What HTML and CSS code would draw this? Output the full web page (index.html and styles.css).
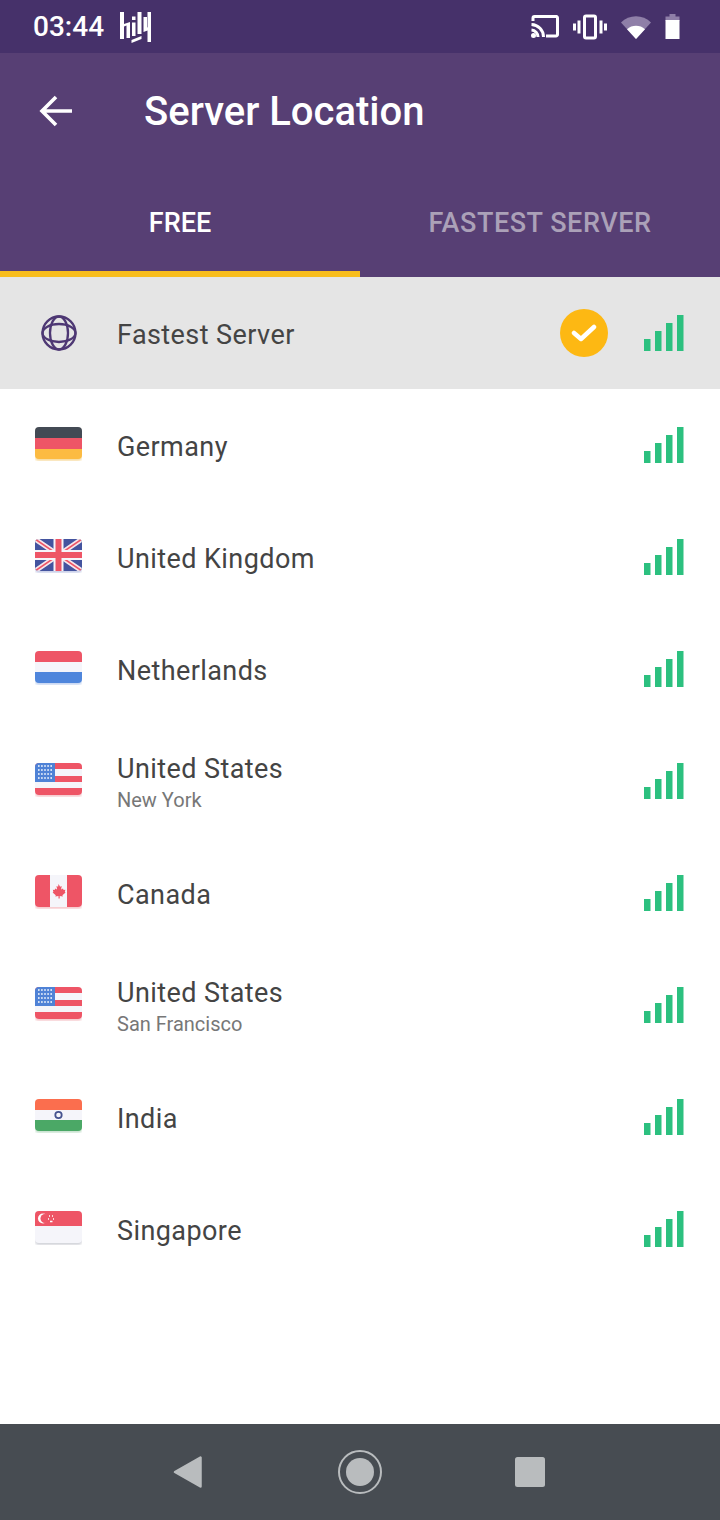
FILE: index.html
```html
<!DOCTYPE html>
<html lang="en">
<head>
  <meta charset="UTF-8">
  <title>Server Location</title>
  <link rel="stylesheet" href="styles.css">
</head>
<body>

  <svg class="defs" width="0" height="0">
    <symbol id="signal" viewBox="0 0 40 36">
      <rect x="0" y="24" width="6.5" height="12" fill="#2cc07f"/>
      <rect x="11" y="16" width="6.5" height="20" fill="#2cc07f"/>
      <rect x="22" y="8" width="6.5" height="28" fill="#2cc07f"/>
      <rect x="33" y="0" width="6.5" height="36" fill="#2cc07f"/>
    </symbol>
    <filter id="soft"><feGaussianBlur stdDeviation="0.8"/></filter>
    <clipPath id="flagClip"><rect width="47" height="32" rx="4"/></clipPath>
    <symbol id="flag-us" viewBox="0 0 47 34">
      <rect y="2" width="47" height="32" rx="4" fill="#f6c9cd" filter="url(#soft)"/>
      <g clip-path="url(#flagClip)">
        <rect width="47" height="32" fill="#f5f5fa"/>
        <rect width="47" height="6" fill="#ee5566"/>
        <rect y="13" width="47" height="6" fill="#ee5566"/>
        <rect y="25" width="47" height="7" fill="#ee5566"/>
        <rect width="20" height="19" fill="#4f82d6"/>
        <path d="M3 3h15M3 7h15M3 11h15M3 15h15" stroke="#fff" stroke-width="1.6" stroke-dasharray="1.6 1.5"/>
      </g>
    </symbol>
  </svg>

  <div class="status-bar">
    <span class="clock">03:44</span>
    <svg class="hily" width="31" height="31" viewBox="0 0 31 31" fill="#fff">
      <path d="M0 0h4v27H0zM4 12l6-2v16H6.500V13.500L4 14.500z"/>
      <path d="M12 4.500h3.500V8H12zM12 10.500h3.500V24H12z"/>
      <path d="M17.500 0h4v22h-4zM11.500 28l10-4v3l-10 4z"/>
      <path d="M23.500 5H27v10.500l.5-.2V0h3.500v30h-3.500V18.500l-4 1.500z"/>
    </svg>
    <div class="status-icons">
      <svg width="28" height="23" viewBox="0 0 28 23" fill="none" stroke="#fff" stroke-width="3">
        <path d="M2 6V3a1.500 1.500 0 0 1 1.500-1.500h21A1.500 1.500 0 0 1 26.500 3v16.500a1.500 1.500 0 0 1-1.500 1.500H15"/>
        <path d="M0.500 9.500A12.500 12.500 0 0 1 12.500 22M0.500 15A7 7 0 0 1 7 22"/>
        <circle cx="2.500" cy="20.500" r="2.500" fill="#fff" stroke="none"/>
      </svg>
      <svg width="34" height="26" viewBox="0 0 34 26" fill="none" stroke="#fff">
        <rect x="11.500" y="2" width="11" height="22" rx="1.500" stroke-width="3"/>
        <path d="M6 6.500v13M28 6.500v13" stroke-width="3"/>
        <path d="M1.500 9.500v7M32.500 9.500v7" stroke-width="3"/>
      </svg>
      <svg width="30" height="24" viewBox="0 0 30 24">
        <path d="M0 7.500C8-1 22-1 30 7.500L15 24z" fill="#8f7fa8"/>
        <path d="M6 14.200c5-4.600 13-4.600 18 0L15 24z" fill="#fff"/>
      </svg>
      <svg width="15" height="25" viewBox="0 0 15 25">
        <path d="M4.500 0h6v2.500h4V7H.5V2.500h4z" fill="#8f7fa8"/>
        <rect x="0.500" y="6" width="14" height="19" fill="#fff"/>
      </svg>
    </div>
  </div>

  <div class="app-bar">
    <div class="toolbar">
      <svg class="back" width="34" height="32" viewBox="0 0 34 32" fill="none" stroke="#fff" stroke-width="3.600">
        <path d="M33 16H3M17 2L3 16l14 14"/>
      </svg>
      <h1>Server Location</h1>
    </div>
    <div class="tabs">
      <div class="tab active">FREE</div>
      <div class="tab">FASTEST SERVER</div>
    </div>
  </div>

  <ul class="server-list">
    <li class="server selected">
      <span class="flag">
        <svg class="globe" width="36" height="36" viewBox="0 0 36 36" fill="none" stroke="#4e3874" stroke-width="2.300">
          <circle cx="18" cy="18" r="16.500"/>
          <ellipse cx="18" cy="18" rx="9" ry="16.500"/>
          <ellipse cx="18" cy="18" rx="16.500" ry="9"/>
        </svg>
      </span>
      <div class="name">Fastest Server</div>
      <span class="check">
        <svg width="26" height="20" viewBox="0 0 26 20" fill="none" stroke="#fff" stroke-width="4.500" stroke-linecap="round" stroke-linejoin="round">
          <path d="M3 10l7 6L23 4"/>
        </svg>
      </span>
      <svg class="signal"><use href="#signal"/></svg>
    </li>

    <li class="server">
      <span class="flag">
        <svg width="47" height="34" viewBox="0 0 47 34">
          <rect y="2" width="47" height="32" rx="4" fill="#f8dca0" filter="url(#soft)"/>
          <g clip-path="url(#flagClip)">
            <rect width="47" height="11" fill="#434a54"/>
            <rect y="11" width="47" height="11" fill="#ee5566"/>
            <rect y="22" width="47" height="10" fill="#fcbb42"/>
          </g>
        </svg>
      </span>
      <div class="name">Germany</div>
      <svg class="signal"><use href="#signal"/></svg>
    </li>

    <li class="server">
      <span class="flag">
        <svg width="47" height="34" viewBox="0 0 47 34">
          <rect y="2" width="47" height="32" rx="4" fill="#c9cfe8" filter="url(#soft)"/>
          <g clip-path="url(#flagClip)">
            <rect width="47" height="32" fill="#44549f"/>
            <path d="M0 0l47 32M47 0L0 32" stroke="#f5e5ea" stroke-width="5"/>
            <path d="M0 0l47 32M47 0L0 32" stroke="#ee5566" stroke-width="1.600"/>
            <path d="M23.500 0v32M0 16h47" stroke="#f5f5fa" stroke-width="10"/>
            <path d="M23.500 0v32M0 16h47" stroke="#ee5566" stroke-width="6"/>
          </g>
        </svg>
      </span>
      <div class="name">United Kingdom</div>
      <svg class="signal"><use href="#signal"/></svg>
    </li>

    <li class="server">
      <span class="flag">
        <svg width="47" height="34" viewBox="0 0 47 34">
          <rect y="2" width="47" height="32" rx="4" fill="#c6d6f2" filter="url(#soft)"/>
          <g clip-path="url(#flagClip)">
            <rect width="47" height="11" fill="#ee5566"/>
            <rect y="11" width="47" height="10" fill="#f5f5fa"/>
            <rect y="21" width="47" height="11" fill="#4f86dc"/>
          </g>
        </svg>
      </span>
      <div class="name">Netherlands</div>
      <svg class="signal"><use href="#signal"/></svg>
    </li>

    <li class="server">
      <span class="flag"><svg width="47" height="34"><use href="#flag-us"/></svg></span>
      <div class="name">United States<small>New York</small></div>
      <svg class="signal"><use href="#signal"/></svg>
    </li>

    <li class="server">
      <span class="flag">
        <svg width="47" height="34" viewBox="0 0 47 34">
          <rect y="2" width="47" height="32" rx="4" fill="#f6c9cd" filter="url(#soft)"/>
          <g clip-path="url(#flagClip)">
            <rect width="47" height="32" fill="#f5f5fa"/>
            <rect width="15" height="32" fill="#ee5566"/>
            <rect x="32" width="15" height="32" fill="#ee5566"/>
            <path d="M23.500 9l1.600 2.800 1.600-.8-.6 3.600 1.900-1.200.6 1.600 1.800-.2-.6 2.200.8.600-3.200 2.600.5 1.400-3.200-.5v2.500h-1.200v-2.500l-3.200.5.500-1.400-3.200-2.600.8-.6-.6-2.200 1.800.2.600-1.600 1.900 1.200-.6-3.600 1.600.8z" fill="#ee5566"/>
          </g>
        </svg>
      </span>
      <div class="name">Canada</div>
      <svg class="signal"><use href="#signal"/></svg>
    </li>

    <li class="server">
      <span class="flag"><svg width="47" height="34"><use href="#flag-us"/></svg></span>
      <div class="name">United States<small>San Francisco</small></div>
      <svg class="signal"><use href="#signal"/></svg>
    </li>

    <li class="server">
      <span class="flag">
        <svg width="47" height="34" viewBox="0 0 47 34">
          <rect y="2" width="47" height="32" rx="4" fill="#c8e2cf" filter="url(#soft)"/>
          <g clip-path="url(#flagClip)">
            <rect width="47" height="11" fill="#fb6e4e"/>
            <rect y="11" width="47" height="10" fill="#f5f5fa"/>
            <rect y="21" width="47" height="11" fill="#4ba866"/>
            <circle cx="23.500" cy="16" r="3.200" fill="none" stroke="#47548f" stroke-width="1.800"/>
          </g>
        </svg>
      </span>
      <div class="name">India</div>
      <svg class="signal"><use href="#signal"/></svg>
    </li>

    <li class="server">
      <span class="flag">
        <svg width="47" height="34" viewBox="0 0 47 34">
          <rect y="2" width="47" height="32" rx="4" fill="#d3d4da" filter="url(#soft)"/>
          <g clip-path="url(#flagClip)">
            <rect width="47" height="32" fill="#f5f5fa"/>
            <rect width="47" height="15" fill="#ee5566"/>
            <circle cx="8" cy="7.500" r="5" fill="#fff"/>
            <circle cx="10" cy="7.500" r="4.500" fill="#ee5566"/>
            <path d="M14 5h1M17 5h1M13 8h1M18 8h1M15 10.500h2.500" stroke="#fff" stroke-width="1.400"/>
          </g>
        </svg>
      </span>
      <div class="name">Singapore</div>
      <svg class="signal"><use href="#signal"/></svg>
    </li>
  </ul>

  <div class="nav-bar">
    <svg width="30" height="34" viewBox="0 0 30 34">
      <path d="M27.500 2.500v29L2 17z" fill="#b9bcbe" stroke="#b9bcbe" stroke-width="2.500" stroke-linejoin="round"/>
    </svg>
    <svg width="44" height="44" viewBox="0 0 44 44">
      <circle cx="22" cy="22" r="21" fill="none" stroke="#b9bcbe" stroke-width="2"/>
      <circle cx="22" cy="22" r="14" fill="#b9bcbe"/>
    </svg>
    <svg width="30" height="30" viewBox="0 0 30 30">
      <rect width="30" height="30" rx="2.500" fill="#b9bcbe"/>
    </svg>
  </div>

</body>
</html>
```

FILE: styles.css
```css
* {
  box-sizing: border-box;
}

body {
  font-family: Roboto, sans-serif;
  background-color: #fff;
  width: 720px;
  height: 1520px;
  margin: 0;
  display: flex;
  flex-direction: column;
  overflow: hidden;
}

.defs {
  display: block;
  height: 0;
}

/* Status bar */
.status-bar {
  height: 53px;
  background-color: #46316a;
  color: #fff;
  display: flex;
  align-items: center;
  padding: 0 40px 0 33px;
}

.clock {
  font-size: 28px;
  font-weight: 500;
  margin-right: 16px;
}

.hily {
  margin-top: 1px;
}

.status-icons {
  margin-left: auto;
  display: flex;
  align-items: center;
  gap: 14px;
}

/* App bar */
.app-bar {
  height: 224px;
  background-color: #573f74;
  display: flex;
  flex-direction: column;
}

.toolbar {
  height: 115px;
  display: flex;
  align-items: center;
  padding-left: 39px;
}

.toolbar h1 {
  margin: 2px 0 0 71px;
  font-size: 40px;
  font-weight: 500;
  color: #fff;
}

.tabs {
  flex: 1;
  display: flex;
}

.tab {
  flex: 1;
  display: flex;
  align-items: center;
  justify-content: center;
  padding-top: 6px;
  font-size: 27px;
  font-weight: 500;
  letter-spacing: 0.55px;
  color: #aba1b8;
  border-bottom: 6px solid transparent;
}

.tab.active {
  color: #fff;
  letter-spacing: 0;
  border-bottom-color: #f8bd1c;
}

/* Server list */
.server-list {
  flex: 1;
  list-style: none;
  margin: 0;
  padding: 0;
}

.server {
  height: 112px;
  display: flex;
  align-items: center;
  padding: 0 36px 0 35px;
  color: #444;
}

.server.selected {
  background-color: #e5e5e5;
}

.flag {
  width: 82px;
  height: 34px;
  margin-bottom: 3px;
  display: flex;
  align-items: center;
}

.flag svg {
  display: block;
}

.globe {
  margin: 3px 0 0 6px;
  flex: none;
}

.name {
  flex: 1;
  padding-top: 3px;
  font-size: 27px;
  letter-spacing: 0.42px;
}

.name small {
  display: block;
  font-size: 20px;
  letter-spacing: 0;
  color: #777;
  margin-top: 3px;
}

.check {
  width: 48px;
  height: 48px;
  border-radius: 50%;
  background-color: #fdb813;
  display: flex;
  align-items: center;
  justify-content: center;
  margin-right: 36px;
}

.signal {
  width: 40px;
  height: 36px;
}

/* Navigation bar */
.nav-bar {
  height: 96px;
  background-color: #474c52;
  display: flex;
  align-items: center;
  padding-left: 173px;
}

.nav-bar svg:nth-child(2) {
  margin-left: 135px;
}

.nav-bar svg:nth-child(3) {
  margin-left: 133px;
}
```
